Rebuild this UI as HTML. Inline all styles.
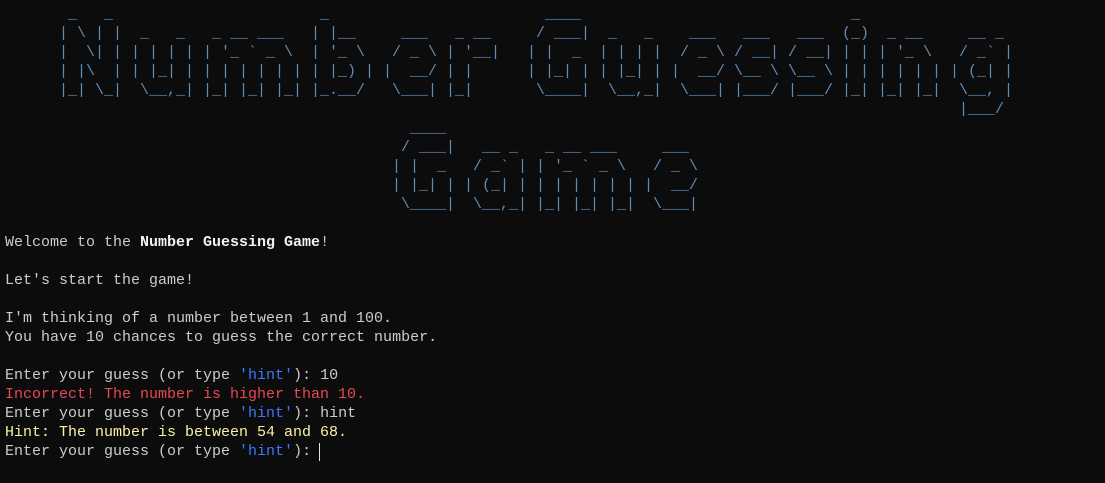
<!DOCTYPE html>
<html><head><meta charset="utf-8"><style>
html,body{margin:0;padding:0;background:#0c0c0c;width:1105px;height:483px;overflow:hidden}
pre{margin:0;font-family:"Liberation Mono",monospace;font-size:15px;line-height:19px;position:absolute}
.a{color:#5f8db8}
.t{left:5px;top:233px;color:#cccccc}
b{color:#f2f2f2}
.h{color:#3b78ff}
.r{color:#e74856}
.y{color:#f9f1a5}
.cur{position:absolute;left:319px;top:443px;width:1px;height:18px;background:#e0e0e0}
</style></head><body>
<pre class="a" style="left:59px;top:5px"> _   _ 
| \ | |
|  \| |
| |\  |
|_| \_|</pre>
<pre class="a" style="left:131px;top:5px">       
 _   _ 
| | | |
| |_| |
 \__,_|</pre>
<pre class="a" style="left:203px;top:5px">           
 _ __ ___  
| '_ ` _ \ 
| | | | | |
|_| |_| |_|</pre>
<pre class="a" style="left:311px;top:5px"> _     
| |__  
| '_ \ 
| |_) |
|_.__/ </pre>
<pre class="a" style="left:383px;top:5px">      
  ___ 
 / _ \
|  __/
 \___|</pre>
<pre class="a" style="left:446px;top:5px">      
 _ __ 
| '__|
| |   
|_|   </pre>
<pre class="a" style="left:527px;top:5px">  ____ 
 / ___|
| |  _ 
| |_| |
 \____|</pre>
<pre class="a" style="left:599px;top:5px">       
 _   _ 
| | | |
| |_| |
 \__,_|</pre>
<pre class="a" style="left:671px;top:5px">      
  ___ 
 / _ \
|  __/
 \___|</pre>
<pre class="a" style="left:734px;top:5px">     
 ___ 
/ __|
\__ \
|___/</pre>
<pre class="a" style="left:788px;top:5px">     
 ___ 
/ __|
\__ \
|___/</pre>
<pre class="a" style="left:842px;top:5px"> _ 
(_)
| |
| |
|_|</pre>
<pre class="a" style="left:878px;top:5px">       
 _ __  
| '_ \ 
| | | |
|_| |_|</pre>
<pre class="a" style="left:950px;top:5px">       
  __ _ 
 / _` |
| (_| |
 \__, |
 |___/ </pre>
<pre class="a" style="left:392px;top:119px">  ____ 
 / ___|
| |  _ 
| |_| |
 \____|</pre>
<pre class="a" style="left:464px;top:119px">       
  __ _ 
 / _` |
| (_| |
 \__,_|</pre>
<pre class="a" style="left:536px;top:119px">           
 _ __ ___  
| '_ ` _ \ 
| | | | | |
|_| |_| |_|</pre>
<pre class="a" style="left:644px;top:119px">      
  ___ 
 / _ \
|  __/
 \___|</pre>
<pre class="t">Welcome to the <b>Number Guessing Game</b>!

Let's start the game!

I'm thinking of a number between 1 and 100.
You have 10 chances to guess the correct number.

Enter your guess (or type <span class="h">'hint'</span>): 10
<span class="r">Incorrect! The number is higher than 10.</span>
Enter your guess (or type <span class="h">'hint'</span>): hint
<span class="y">Hint: The number is between 54 and 68.</span>
Enter your guess (or type <span class="h">'hint'</span>): </pre>
<div class="cur"></div>
</body></html>
